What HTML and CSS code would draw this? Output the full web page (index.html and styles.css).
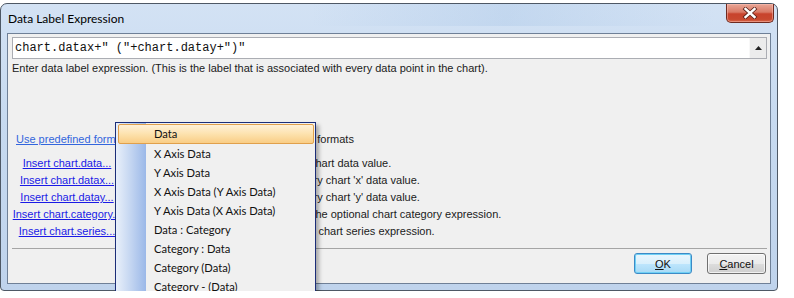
FILE: index.html
```html
<!DOCTYPE html>
<html>
<head>
    <title>Data Label Expression</title>
    <link rel="stylesheet" href="styles.css">
</head>
<body>

<div class="window">
    <div class="titlebar">
        <span class="title">Data Label Expression</span>
        <span class="close">
            <svg width="18" height="12" viewBox="0 0 18 12">
                <path d="M4.5 2 L13.5 10 M13.5 2 L4.5 10" stroke="#5a2018" stroke-width="4" stroke-linecap="square"/>
                <path d="M4.5 2 L13.5 10 M13.5 2 L4.5 10" stroke="#fff" stroke-width="2.4" stroke-linecap="square"/>
            </svg>
        </span>
    </div>

    <div class="client">
        <div class="expr">
            <span class="expr-text">chart.datax+" ("+chart.datay+")"</span>
            <span class="scroll-up">
                <svg width="7" height="4" viewBox="0 0 7 4"><path d="M0 4 L3.5 0 L7 4 Z" fill="#222"/></svg>
            </span>
        </div>
        <div class="hint">Enter data label expression. (This is the label that is associated with every data point in the chart).</div>

        <div class="formats">
            <a class="use-link" href="#">Use predefined formats</a>
            <span class="desc">Pick from the formats</span>

            <a class="insert" href="#">Insert chart.data...</a>
            <span class="desc">Returns the chart data value.</span>

            <a class="insert" href="#">Insert chart.datax...</a>
            <span class="desc">Inserts primary chart 'x' data value.</span>

            <a class="insert" href="#">Insert chart.datay...</a>
            <span class="desc">Inserts primary chart 'y' data value.</span>

            <a class="insert" href="#">Insert chart.category...</a>
            <span class="desc">Inserts all of the optional chart category expression.</span>

            <a class="insert" href="#">Insert chart.series...</a>
            <span class="desc">Inserts all the chart series expression.</span>
        </div>

        <div class="separator"></div>

        <div class="buttons">
            <button class="btn default"><u>O</u>K</button>
            <button class="btn"><u>C</u>ancel</button>
        </div>
    </div>

    <ul class="menu">
        <li class="active">Data</li>
        <li>X Axis Data</li>
        <li>Y Axis Data</li>
        <li>X Axis Data (Y Axis Data)</li>
        <li>Y Axis Data (X Axis Data)</li>
        <li>Data : Category</li>
        <li>Category : Data</li>
        <li>Category (Data)</li>
        <li>Category - (Data)</li>
    </ul>
</div>

</body>
</html>
```

FILE: styles.css
```css
html, body {
    margin: 0;
    padding: 0;
    overflow: hidden;
}
body {
    background: #fff;
    font-family: "Liberation Sans", Arial, sans-serif;
    font-size: 11px;
    color: #1b1b1b;
}

/* window frame (aero glass) */
.window {
    position: relative;
    width: 764px;
    margin-top: 3px;
    padding: 0 6px 6px 6px;
    border: 1px solid #4e5865;
    border-radius: 7px 7px 4px 4px;
    background:
        linear-gradient(90deg, rgba(255,255,255,0) 40%, rgba(160,192,228,0.3) 65%, rgba(255,255,255,0) 92%) top / 100% 22px no-repeat,
        linear-gradient(180deg, #d3e2f4 0%, #c7daf0 40%, #bfd3ec 100%);
}
.titlebar {
    height: 29px;
    margin: 0 -6px;
    padding-left: 7px;
    display: flex;
    align-items: flex-start;
    justify-content: space-between;
}
.title {
    font-family: Lato, "Open Sans", sans-serif;
    font-size: 12px;
    color: #000;
    padding-top: 7px;
}
.close {
    width: 46px;
    height: 18px;
    margin-right: 3px;
    display: flex;
    align-items: center;
    justify-content: center;
    border: 1px solid #6e2a20;
    border-top: none;
    border-radius: 0 0 5px 5px;
    background: linear-gradient(180deg, #e9a696 0%, #d97a66 45%, #c8432c 55%, #c8482f 85%, #d86a4c 100%);
    box-shadow: inset 0 0 0 1px rgba(255,200,190,0.45);
}

/* client area */
.client {
    height: 249px;
    border: 1px solid #6f8097;
    background: #f0f0f0;
    display: flex;
    flex-direction: column;
}
.expr {
    margin: 3px 3px 0 4px;
    height: 20px;
    border: 1px solid #abadb3;
    background: #fff;
    display: flex;
}
.expr-text {
    flex: 1;
    padding: 1px 0 0 2px;
    font-family: "Liberation Mono", "Courier New", monospace;
    font-size: 12px;
    line-height: 19px;
    color: #111;
}
.scroll-up {
    width: 16px;
    background: #ececec;
    border-left: 1px solid #f8f8f8;
    display: flex;
    align-items: center;
    justify-content: center;
}
.hint {
    margin: 2px 0 0 4px;
    line-height: 14px;
}

.formats {
    margin-top: 56px;
    display: grid;
    grid-template-columns: 118px 1fr;
    grid-template-rows: 24px repeat(5, 17px);
    column-gap: 124px;
    align-items: start;
    line-height: 17px;
    white-space: nowrap;
}
.formats a {
    color: #1a1ae6;
}
.formats .use-link {
    padding-left: 8px;
    color: #3366dd;
}
.insert {
    justify-self: center;
}

.separator {
    margin: 8px 3px 0 4px;
    height: 1px;
    background: #a5a5a5;
}
.buttons {
    margin: 4px 4px 0 0;
    display: flex;
    justify-content: flex-end;
    gap: 15px;
}
.btn {
    width: 58px;
    height: 21px;
    padding: 0;
    font-family: "Liberation Sans", Arial, sans-serif;
    font-size: 11px;
    color: #111;
    border: 1px solid #707070;
    border-radius: 3px;
    background: linear-gradient(180deg, #f3f3f3 0%, #ebebeb 50%, #dddddd 51%, #cfcfcf 100%);
    box-shadow: inset 0 0 0 1px rgba(255,255,255,0.7);
}
.btn + .btn {
    width: 59px;
}
.btn.default {
    border-color: #3c8ac6;
    background: linear-gradient(180deg, #eaf6fd 0%, #d9f0fc 50%, #bee6fd 51%, #a7d9f5 100%);
    box-shadow: inset 0 0 0 1px #6fd0f5;
}

/* drop-down list */
.menu {
    position: absolute;
    left: 114px;
    top: 118px;
    width: 196px;
    height: 190px;
    margin: 0;
    padding: 1px 1px 0 2px;
    list-style: none;
    border: 1px solid #1b2d78;
    background:
        linear-gradient(90deg, #e9f0fa 0%, #c3d5f1 50%, #9bb8e8 100%) 0 0 / 30px 100% no-repeat,
        #f0f0f0;
    box-shadow: 3px 3px 4px rgba(0,0,0,0.3);
    font-family: Lato, "Open Sans", sans-serif;
    font-size: 11.2px;
    color: #111;
}
.menu li {
    height: 19px;
    line-height: 18px;
    padding-left: 35px;
    border: 1px solid transparent;
    box-sizing: border-box;
}
.menu li.active {
    height: 20px;
    border-color: #e0a04c;
    border-radius: 2px;
    background: linear-gradient(180deg, #fff1d8 0%, #fde2ae 50%, #f9cd85 100%);
}
```
